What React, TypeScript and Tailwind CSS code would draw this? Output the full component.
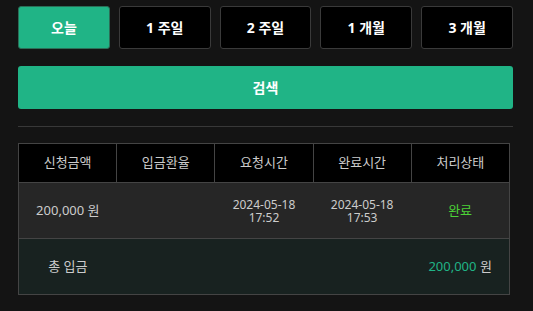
import React, { useState } from "react";

const periods = ["오늘", "1 주일", "2 주일", "1 개월", "3 개월"];
const headers = ["신청금액", "입금환율", "요청시간", "완료시간", "처리상태"];

const App = () => {
  const [active, setActive] = useState(0);

  return (
    <div
      className="min-h-screen bg-[#141414] pl-[18px] pr-[20px] pt-[6px] text-[#cccccc]"
      style={{ fontFamily: '"Noto Sans", "Noto Sans CJK KR", sans-serif' }}
    >
      {/* Period buttons */}
      <div className="grid grid-cols-5 gap-[9px]">
        {periods.map((p, i) => (
          <button
            key={p}
            type="button"
            onClick={() => setActive(i)}
            className={`h-[43px] rounded-[3px] border text-[14px] font-bold text-white ${
              active === i
                ? "border-[#2b6e57] bg-[#20b486]"
                : "border-[#3a3a3a] bg-black"
            }`}
          >
            {p}
          </button>
        ))}
      </div>

      {/* Search */}
      <button
        type="button"
        className="mt-[17px] h-[43px] w-full rounded-[3px] bg-[#20b486] text-[14px] font-bold text-white"
      >
        검색
      </button>

      <div className="mt-[17px] h-px w-full bg-[#383838]" />

      {/* Table */}
      <table className="mt-[16px] w-[492px] table-fixed border-collapse text-[13px]">
        <thead>
          <tr className="h-[39px] bg-black">
            {headers.map((h) => (
              <th key={h} className="border border-[#444444] font-normal text-[#cccccc]">
                {h}
              </th>
            ))}
          </tr>
        </thead>
        <tbody>
          <tr className="h-[56px] bg-[#262626] text-center">
            <td className="border-y border-l border-[#444444]">200,000 원</td>
            <td className="border-y border-[#444444]"></td>
            <td className="border-y border-[#444444] text-[12px] leading-[13px]">
              2024-05-18
              <br />
              17:52
            </td>
            <td className="border-y border-[#444444] text-[12px] leading-[13px]">
              2024-05-18
              <br />
              17:53
            </td>
            <td className="border-y border-r border-[#444444] text-[#4cd137]">완료</td>
          </tr>
          <tr className="h-[56px] bg-[#182220] text-center">
            <td className="border-y border-l border-[#444444]">총 입금</td>
            <td className="border-y border-[#444444]"></td>
            <td className="border-y border-[#444444]"></td>
            <td className="border-y border-[#444444]"></td>
            <td className="border-y border-r border-[#444444]">
              <span className="text-[#20b486]">200,000</span> 원
            </td>
          </tr>
        </tbody>
      </table>
    </div>
  );
};

export default App;
